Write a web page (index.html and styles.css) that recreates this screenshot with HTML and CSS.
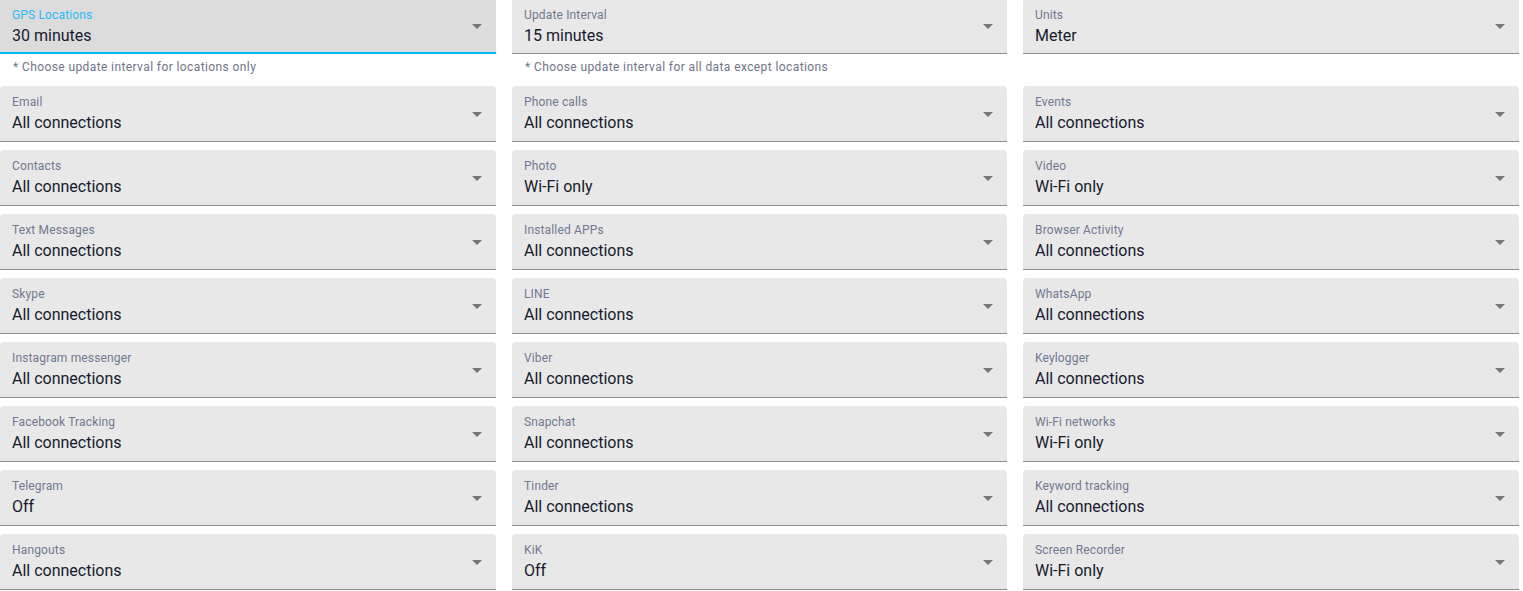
FILE: index.html
```html
<!DOCTYPE html>
<html lang="en">
<head>
  <meta charset="UTF-8"/>
  <title>Settings</title>
  <link rel="stylesheet" href="styles.css">
</head>
<body>
  <div class="settings-grid">
    <div class="cell">
      <div class="field focused">
        <div class="field-text">
          <div class="field-label">GPS Locations</div>
          <div class="field-value">30 minutes</div>
        </div>
        <svg class="arrow" width="10" height="5" viewBox="0 0 10 5"><path d="M0 0h10L5 5z"/></svg>
      </div>
      <div class="hint">* Choose update interval for locations only</div>
    </div>
    <div class="cell">
      <div class="field">
        <div class="field-text">
          <div class="field-label">Update Interval</div>
          <div class="field-value">15 minutes</div>
        </div>
        <svg class="arrow" width="10" height="5" viewBox="0 0 10 5"><path d="M0 0h10L5 5z"/></svg>
      </div>
      <div class="hint">* Choose update interval for all data except locations</div>
    </div>
    <div class="cell">
      <div class="field">
        <div class="field-text">
          <div class="field-label">Units</div>
          <div class="field-value">Meter</div>
        </div>
        <svg class="arrow" width="10" height="5" viewBox="0 0 10 5"><path d="M0 0h10L5 5z"/></svg>
      </div>
    </div>
  </div>

  <div class="settings-grid" id="features"></div>

  <script>
    // label / value pairs, read left to right
    const features = [
      ["Email", "All connections"], ["Phone calls", "All connections"], ["Events", "All connections"],
      ["Contacts", "All connections"], ["Photo", "Wi-Fi only"], ["Video", "Wi-Fi only"],
      ["Text Messages", "All connections"], ["Installed APPs", "All connections"], ["Browser Activity", "All connections"],
      ["Skype", "All connections"], ["LINE", "All connections"], ["WhatsApp", "All connections"],
      ["Instagram messenger", "All connections"], ["Viber", "All connections"], ["Keylogger", "All connections"],
      ["Facebook Tracking", "All connections"], ["Snapchat", "All connections"], ["Wi-Fi networks", "Wi-Fi only"],
      ["Telegram", "Off"], ["Tinder", "All connections"], ["Keyword tracking", "All connections"],
      ["Hangouts", "All connections"], ["KiK", "Off"], ["Screen Recorder", "Wi-Fi only"]
    ];

    const arrow = '<svg class="arrow" width="10" height="5" viewBox="0 0 10 5"><path d="M0 0h10L5 5z"/></svg>';

    document.getElementById("features").innerHTML = features.map(([label, value]) =>
      `<div class="field">
        <div class="field-text">
          <div class="field-label">${label}</div>
          <div class="field-value">${value}</div>
        </div>
        ${arrow}
      </div>`
    ).join('');
  </script>
</body>
</html>
```

FILE: styles.css
```css
:root {
  --fieldBg: #e8e8e8;
  --fieldFocusBg: #dcdcdc;
  --lineColor: #8b8b8b;
  --focusColor: #00b7f1;
  --labelColor: #717891;
  --valueColor: #171a2c;
}

body {
  margin: 0;
  background: #fff;
  font-family: Roboto, "Liberation Sans", Arial, sans-serif;
}

/* three equal columns of select fields */
.settings-grid {
  display: grid;
  grid-template-columns: 496px 495px 496px;
  column-gap: 16px;
  row-gap: 8px;
  width: 1519px;
}

/* top row is scrolled up a little */
.settings-grid:first-child {
  margin-top: -2px;
  margin-bottom: 8px;
}

.settings-grid:first-child .field-text {
  padding-top: 9px;
}

.field {
  display: flex;
  align-items: flex-start;
  height: 56px;
  box-sizing: border-box;
  padding: 0 14px 0 12px;
  background-color: var(--fieldBg);
  border-radius: 4px 4px 0 0;
  border-bottom: 1px solid var(--lineColor);
}

.field.focused {
  background-color: var(--fieldFocusBg);
  border-bottom: 2px solid var(--focusColor);
}

.field-text {
  flex: 1;
  padding-top: 8px;
}

.field-label {
  font-size: 12px;
  line-height: 16px;
  letter-spacing: 0.15px;
  color: var(--labelColor);
}

.focused .field-label {
  color: #2bb9f3;
}

.field-value {
  margin-top: 1px;
  font-size: 16px;
  line-height: 24px;
  color: var(--valueColor);
}

.arrow {
  fill: #767676;
  flex-shrink: 0;
  margin-top: 26px;
}

/* helper text under the interval selects */
.hint {
  margin-top: 5px;
  padding-left: 13px;
  font-size: 12px;
  line-height: 16px;
  letter-spacing: 0.4px;
  color: #6f7587;
  height: 19px;
}
```
